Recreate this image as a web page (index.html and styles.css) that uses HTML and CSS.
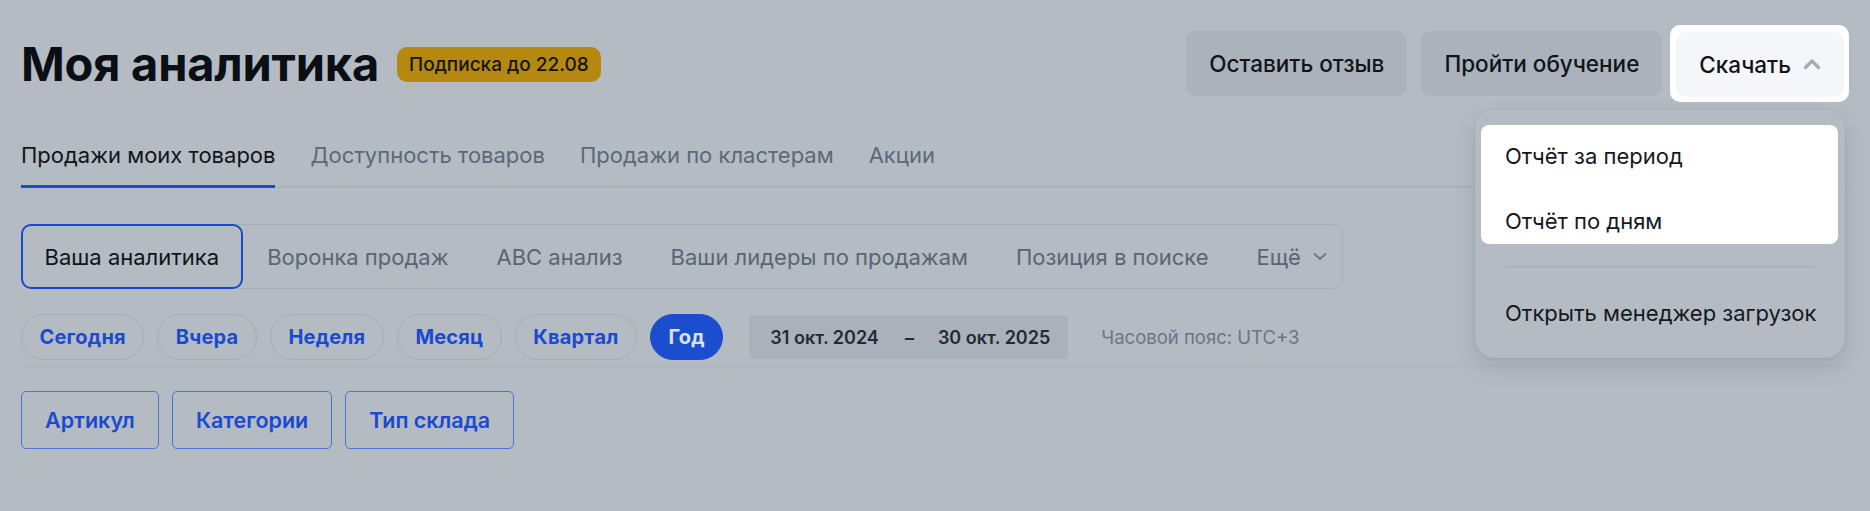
FILE: index.html
```html
<!DOCTYPE html>
<html lang="ru">
<head>
<meta charset="utf-8">
<title>Моя аналитика</title>
<link rel="stylesheet" href="styles.css">
</head>
<body>
<div class="page">
  <header class="header">
    <div class="title-wrap">
      <h1 class="title">Моя аналитика</h1>
      <span class="badge">Подписка до 22.08</span>
    </div>
    <div class="actions">
      <button class="btn">Оставить отзыв</button>
      <button class="btn">Пройти обучение</button>
      <div class="spot">
        <button class="btn btn-light">Скачать
          <svg class="chev-up" width="18" height="12" viewBox="0 0 18 12"><path d="M2.5 9.5 L9 3 L15.5 9.5" fill="none" stroke="currentColor" stroke-width="3.2" stroke-linecap="round" stroke-linejoin="round"/></svg>
        </button>
        <div class="menu">
          <div class="menu-spot">
            <div class="menu-item">Отчёт за период</div>
            <div class="menu-item">Отчёт по дням</div>
          </div>
          <div class="menu-sep"></div>
          <div class="menu-item menu-last">Открыть менеджер загрузок</div>
        </div>
      </div>
    </div>
  </header>

  <nav class="tabs">
    <span class="tab active">Продажи моих товаров</span>
    <span class="tab">Доступность товаров</span>
    <span class="tab">Продажи по кластерам</span>
    <span class="tab">Акции</span>
  </nav>

  <div class="seg">
    <span class="seg-item seg-active">Ваша аналитика</span>
    <span class="seg-item">Воронка продаж</span>
    <span class="seg-item">АВС анализ</span>
    <span class="seg-item">Ваши лидеры по продажам</span>
    <span class="seg-item">Позиция в поиске</span>
    <span class="seg-item seg-more">Ещё
      <svg width="14" height="9" viewBox="0 0 14 9"><path d="M1.5 1.8 L7 7 L12.5 1.8" fill="none" stroke="currentColor" stroke-width="1.8" stroke-linecap="round" stroke-linejoin="round"/></svg>
    </span>
  </div>

  <div class="period">
    <span class="pill">Сегодня</span>
    <span class="pill">Вчера</span>
    <span class="pill">Неделя</span>
    <span class="pill">Месяц</span>
    <span class="pill">Квартал</span>
    <span class="pill pill-active">Год</span>
    <div class="dates">
      <span>31 окт. 2024</span>
      <span class="dash">–</span>
      <span>30 окт. 2025</span>
    </div>
    <span class="tz">Часовой пояс: UTC+3</span>
  </div>

  <div class="filters">
    <button class="fbtn">Артикул</button>
    <button class="fbtn">Категории</button>
    <button class="fbtn">Тип склада</button>
  </div>
</div>
</body>
</html>
```

FILE: styles.css
```css
* { box-sizing: border-box; }
html, body { margin: 0; height: 100%; }
body {
  background: #b4bbc3;
  font-family: Inter, "Noto Sans", "Liberation Sans", sans-serif;
  color: #0d1219;
}
.page { padding: 25px 21px 0 21px; }

.header {
  display: flex;
  align-items: center;
  justify-content: space-between;
  height: 76px;
}
.title-wrap { display: flex; align-items: center; gap: 18px; }
.title {
  margin: 0;
  font-size: 47px;
  font-weight: 700;
  letter-spacing: -0.2px;
  color: #0a0e15;
  line-height: 1;
}
.badge {
  background: #b5890f;
  color: #141414;
  font-size: 19px;
  font-weight: 500;
  height: 35px;
  line-height: 35px;
  padding: 0 12px;
  border-radius: 10px;
  margin-top: 2px;
}

.actions { display: flex; align-items: center; gap: 14px; }
.btn {
  font-family: inherit;
  border: 0;
  background: #abb2bb;
  color: #101419;
  font-size: 22.5px;
  font-weight: 500;
  height: 65px;
  padding: 0 23px;
  border-radius: 10px;
  display: flex;
  align-items: center;
  gap: 14px;
  white-space: nowrap;
}
.spot {
  position: relative;
  background: #ffffff;
  border-radius: 10px;
  padding: 7px 5px 5px 6px;
  margin-left: -6px;
}
.btn-light { background: #f4f6f9; padding: 0 23px 0 23px; gap: 12px; }
.chev-up { color: #a3abb7; }

.menu {
  position: absolute;
  top: calc(100% + 7px);
  right: 4px;
  width: 370px;
  background: #b4bbc3;
  border-radius: 20px;
  box-shadow: 0 10px 22px rgba(40, 50, 65, 0.14), 0 0 0 1px rgba(60, 70, 85, 0.05);
  padding: 16px 7px 33px 6px;
  z-index: 5;
}
.menu-spot {
  background: #ffffff;
  border-radius: 8px;
  padding: 19px 24px 11px;
  display: flex;
  flex-direction: column;
  gap: 41px;
}
.menu-item {
  font-size: 22px;
  line-height: 24px;
  color: #14181e;
  white-space: nowrap;
}
.menu-sep {
  height: 2px;
  background: #a9b1ba;
  margin: 22px 23px 33px 24px;
}
.menu-last { padding-left: 24px; }

.tabs {
  display: flex;
  gap: 35px;
  margin-top: 40px;
  border-bottom: 2px solid #a8b0b9;
}
.tab {
  font-size: 22px;
  line-height: 28px;
  padding-bottom: 16px;
  color: #5c6877;
  border-bottom: 3px solid transparent;
  margin-bottom: -2px;
  white-space: nowrap;
}
.tab.active { color: #10141a; border-bottom-color: #1a4bc9; }

.seg {
  display: inline-flex;
  align-items: center;
  height: 65px;
  margin-top: 36px;
  border: 1.5px solid #a7afb9;
  border-radius: 10px;
}
.seg-item {
  font-size: 22px;
  color: #5a6574;
  padding: 0 24px;
  height: 100%;
  display: flex;
  align-items: center;
  white-space: nowrap;
  flex-shrink: 0;
}
.seg-active {
  color: #10141a;
  border: 2px solid #1649cf;
  border-radius: 10px;
  margin: -1.5px 0 -1.5px -1.5px;
  height: 65px;
  padding: 0 22px;
}
.seg-more { gap: 12px; padding-right: 15px; }
.seg-more svg { color: #6a7482; }

.period {
  display: flex;
  align-items: center;
  gap: 13px;
  margin-top: 25px;
  padding-bottom: 6px;
  border-bottom: 1px solid #adb4bd;
}
.pill {
  height: 46px;
  display: flex;
  align-items: center;
  padding: 0 17.5px;
  border: 1.5px solid #a4acb7;
  border-radius: 23px;
  font-size: 20px;
  font-weight: 700;
  letter-spacing: 0.2px;
  color: #1a4ad0;
  white-space: nowrap;
}
.pill-active { background: #1a4ecf; border-color: #1a4ecf; color: #dce3ee; }
.dates {
  display: flex;
  align-items: center;
  height: 44px;
  margin-left: 13px;
  padding: 0 18px 0 21px;
  background: #aab1ba;
  border-radius: 4px;
  font-size: 18px;
  font-weight: 600;
  color: #232a33;
  white-space: nowrap;
}
.dash { margin: 0 24px 0 26px; }
.tz { font-size: 18.5px; color: #6b7583; margin-left: 20px; white-space: nowrap; }

.filters { display: flex; gap: 13px; margin-top: 24px; }
.fbtn {
  font-family: inherit;
  background: transparent;
  height: 58px;
  padding: 0 23px;
  border: 1.5px solid #4c75d3;
  border-radius: 5px;
  font-size: 21.5px;
  font-weight: 600;
  color: #1a4ad0;
}
```
